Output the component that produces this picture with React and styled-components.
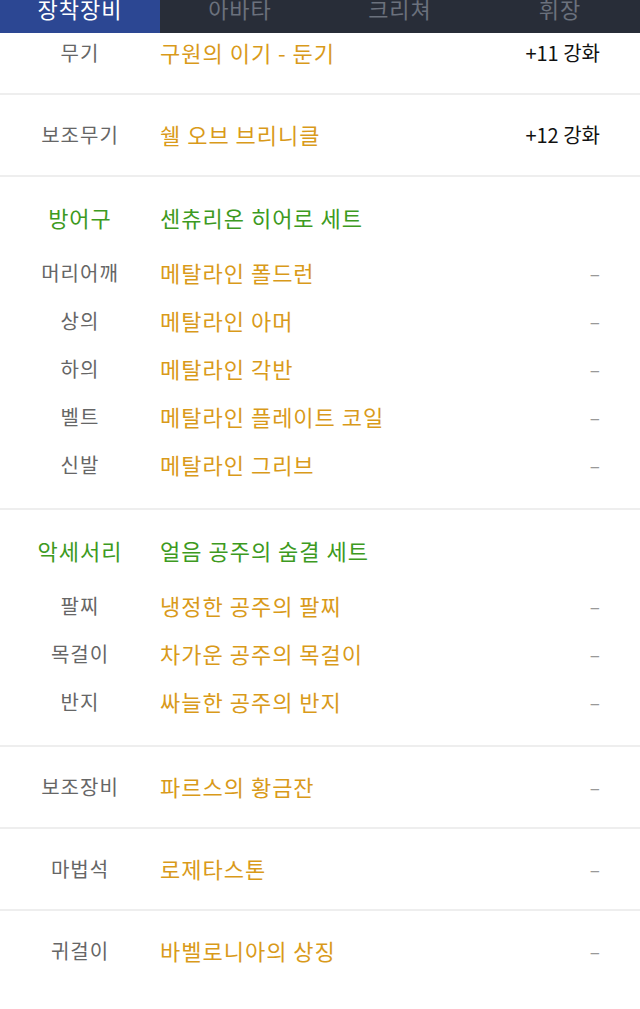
import styled, { createGlobalStyle } from "styled-components";

const GlobalStyle = createGlobalStyle`
  body {
    margin: 0;
    background: #ffffff;
    font-family: "Noto Sans CJK KR", "Noto Sans", sans-serif;
  }
`;

const tabs = ["장착장비", "아바타", "크리쳐", "휘장"];

const sections = [
  { rows: [{ label: "무기", name: "구원의 이기 - 둔기", value: "+11 강화" }], clipped: true },
  { rows: [{ label: "보조무기", name: "쉘 오브 브리니클", value: "+12 강화" }] },
  {
    set: { label: "방어구", name: "센츄리온 히어로 세트" },
    rows: [
      { label: "머리어깨", name: "메탈라인 폴드런" },
      { label: "상의", name: "메탈라인 아머" },
      { label: "하의", name: "메탈라인 각반" },
      { label: "벨트", name: "메탈라인 플레이트 코일" },
      { label: "신발", name: "메탈라인 그리브" },
    ],
  },
  {
    set: { label: "악세서리", name: "얼음 공주의 숨결 세트" },
    rows: [
      { label: "팔찌", name: "냉정한 공주의 팔찌" },
      { label: "목걸이", name: "차가운 공주의 목걸이" },
      { label: "반지", name: "싸늘한 공주의 반지" },
    ],
  },
  { rows: [{ label: "보조장비", name: "파르스의 황금잔" }] },
  { rows: [{ label: "마법석", name: "로제타스톤" }] },
  { rows: [{ label: "귀걸이", name: "바벨로니아의 상징" }], last: true },
];

const App = () => {
  return (
    <>
      <GlobalStyle />
      <Page>
        <TabBar>
          {tabs.map((t, i) => (
            <Tab key={t} $active={i === 0}>
              {t}
            </Tab>
          ))}
        </TabBar>
        {sections.map((s, i) => (
          <Section key={i} $clipped={s.clipped} $set={!!s.set} $last={s.last}>
            {s.set && (
              <SetRow>
                <SetLabel>{s.set.label}</SetLabel>
                <SetName>{s.set.name}</SetName>
              </SetRow>
            )}
            {s.rows.map((r) => (
              <Row key={r.label} $clipped={s.clipped}>
                <Label>{r.label}</Label>
                <ItemName>{r.name}</ItemName>
                {r.value ? <Value>{r.value}</Value> : <Dash>–</Dash>}
              </Row>
            ))}
          </Section>
        ))}
      </Page>
    </>
  );
};

const Page = styled.div`
  width: 640px;
  min-height: 1009px;
  background: #ffffff;
`;

const TabBar = styled.div`
  display: grid;
  grid-template-columns: repeat(4, 1fr);
  grid-template-rows: 33px;
  height: 33px;
  overflow: hidden;
  background: #282d38;
`;

const Tab = styled.div`
  display: flex;
  justify-content: center;
  align-items: flex-start;
  height: 33px;
  font-size: 22px;
  letter-spacing: 1px;
  line-height: 16px;
  color: ${(props) => (props.$active ? "#ffffff" : "#6b717d")};
  background: ${(props) => (props.$active ? "#2c4793" : "transparent")};
`;

const Section = styled.div`
  display: flex;
  flex-direction: column;
  padding: ${(props) =>
    props.$clipped ? "0 0 22px" : props.$set ? "16px 0 20px" : "15px 0 17px"};
  border-bottom: ${(props) => (props.$last ? "none" : "2px solid #eeeeee")};
`;

const Row = styled.div`
  display: grid;
  grid-template-columns: 160px 1fr auto;
  align-items: center;
  height: ${(props) => (props.$clipped ? "38px" : "48px")};
  padding-right: 40px;
`;

const SetRow = styled(Row)`
  margin-bottom: 7px;
`;

const Label = styled.span`
  text-align: center;
  font-size: 20px;
  letter-spacing: 1px;
  color: #666666;
`;

const SetLabel = styled(Label)`
  font-size: 22px;
  color: #3d9a21;
`;

const ItemName = styled.span`
  font-size: 22px;
  letter-spacing: 1px;
  color: #d99a1a;
  white-space: nowrap;
`;

const SetName = styled(ItemName)`
  color: #3d9a21;
`;

const Value = styled.span`
  font-size: 20px;
  color: #111111;
`;

const Dash = styled.span`
  font-size: 19px;
  color: #999999;
`;

export default App;
